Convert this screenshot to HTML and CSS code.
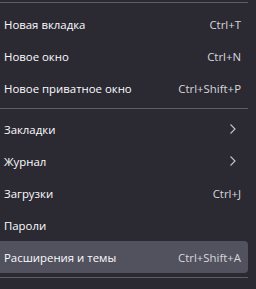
FILE: index.html
```html
<!DOCTYPE html>
<html lang="ru">
<head>
<meta charset="utf-8">
<link rel="stylesheet" href="styles.css">
</head>
<body>
<div class="menu">
  <div class="sep sep-top"></div>
  <div class="group">
    <div class="item"><span class="label">Новая вкладка</span><span class="key">Ctrl+T</span></div>
    <div class="item"><span class="label">Новое окно</span><span class="key">Ctrl+N</span></div>
    <div class="item"><span class="label">Новое приватное окно</span><span class="key">Ctrl+Shift+P</span></div>
  </div>
  <div class="sep"></div>
  <div class="group">
    <div class="item"><span class="label">Закладки</span><svg class="chev" width="8" height="12" viewBox="0 0 8 12"><path d="M1.5 1.5 L6 6 L1.5 10.5" fill="none" stroke="#bfbfc9" stroke-width="1.2"/></svg></div>
    <div class="item"><span class="label">Журнал</span><svg class="chev" width="8" height="12" viewBox="0 0 8 12"><path d="M1.5 1.5 L6 6 L1.5 10.5" fill="none" stroke="#bfbfc9" stroke-width="1.2"/></svg></div>
    <div class="item"><span class="label">Загрузки</span><span class="key">Ctrl+J</span></div>
    <div class="item"><span class="label">Пароли</span></div>
    <div class="item active"><span class="label">Расширения и темы</span><span class="key">Ctrl+Shift+A</span></div>
  </div>
  <div class="sep"></div>
</div>
</body>
</html>
```
FILE: styles.css
```css
html, body {
  margin: 0;
  padding: 0;
  background: #2b2a33;
}
body {
  width: 256px;
  height: 289px;
  overflow: hidden;
  font-family: "Open Sans", "Noto Sans", sans-serif;
  font-size: 11.4px;
  color: #fbfbfe;
}
.menu {
  width: 248px;
  padding-top: 2px;
}
.sep {
  height: 1px;
  background: #5e5d66;
  margin: 4px 0;
}
.sep-top {
  margin-top: 0;
  margin-bottom: 5px;
}
.item {
  height: 32px;
  display: flex;
  align-items: center;
  justify-content: space-between;
  padding: 0 7px 0 4px;
  border-radius: 0 4px 4px 0;
}
.item.active {
  background: #52525e;
}
.key {
  color: #d7d7dc;
}
.chev {
  margin-right: 4px;
}
```
